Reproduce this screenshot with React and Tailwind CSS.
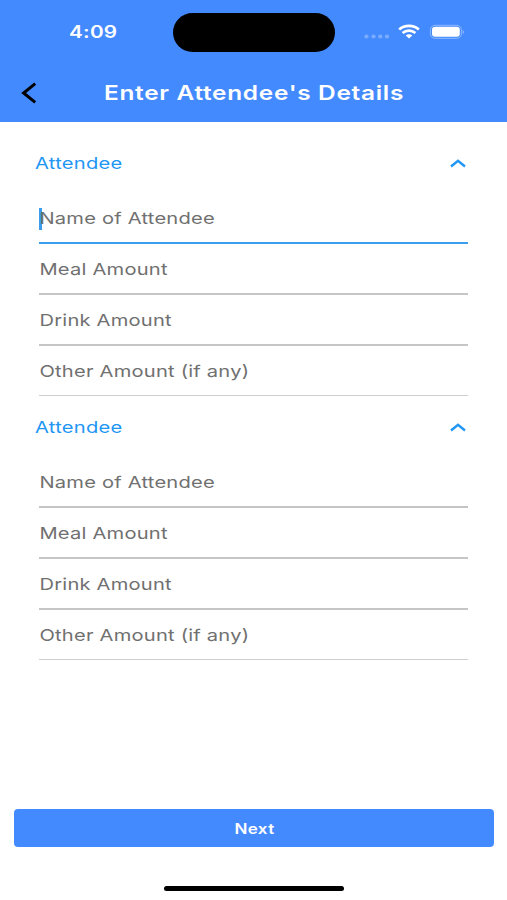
import { useState } from "react";

const fields = [
  { label: "Name of Attendee", row: "h-[51px] border-b-2 border-[#c4c4c4] pt-0.5" },
  { label: "Meal Amount", row: "h-[51px] border-b-2 border-[#c6c6c6] pt-0.5" },
  { label: "Drink Amount", row: "h-[51px] border-b-2 border-[#c6c6c6] pt-0.5" },
  { label: "Other Amount (if any)", row: "h-[50px] border-b border-[#cfcfcf] pt-px" },
];

function StatusBar() {
  return (
    <div className="flex h-16 items-center">
      <div className="w-[173px] pt-px pl-[69px] text-[17px] font-semibold text-white">
        <span className="inline-block origin-left scale-x-[1.22] tracking-[0.2px]">4:09</span>
      </div>
      <div className="h-[39px] w-[162px] rounded-full bg-black" />
      <div className="ml-[28px] flex items-center">
        <svg width="27" height="16" viewBox="0 0 27 16" fill="#79acff">
          <ellipse cx="3.5" cy="12.5" rx="2.2" ry="1.9" />
          <ellipse cx="10.5" cy="12.5" rx="2.2" ry="1.9" />
          <ellipse cx="17.3" cy="12.5" rx="2.2" ry="1.9" />
          <ellipse cx="24" cy="12.5" rx="2.2" ry="1.9" />
        </svg>
        <svg className="ml-2" width="22" height="16" viewBox="0 0 22 16" fill="none" stroke="white" strokeWidth="2.7">
          <path d="M1.2 5.5C6.5.6 15.5.6 20.8 5.5" />
          <path d="M4.6 8.9c3.6-3.1 9.2-3.1 12.8 0" />
          <path d="M7.7 11.4c2-1.7 4.6-1.7 6.6 0L11 14.6z" fill="white" stroke="none" />
        </svg>
        <svg className="ml-[9px]" width="37" height="16" viewBox="0 0 37 16">
          <rect x="1.4" y="1.3" width="31" height="13" rx="4.5" fill="none" stroke="#8db7ff" />
          <rect x="3" y="2.8" width="27.8" height="10" rx="3" fill="white" />
          <path d="M33.6 5.8v4.5c1.8-.8 1.8-3.7 0-4.5z" fill="#8db7ff" />
        </svg>
      </div>
    </div>
  );
}

function AttendeeSection({ focused }) {
  const [open, setOpen] = useState(true);

  return (
    <section className="h-[264px]">
      <button
        className="flex h-[71px] w-full items-center justify-between pt-3 pr-[41px] pl-[35px] text-[16.5px] text-[#2196f3]"
        onClick={() => setOpen(!open)}
      >
        <span className="inline-block origin-left scale-x-[1.22] tracking-[0.22px]">Attendee</span>
        <svg width="16" height="9" viewBox="0 0 16 9" fill="none" stroke="currentColor" strokeWidth="2.4">
          <path d="M1 7.5l7-5.7 7 5.7" />
        </svg>
      </button>
      {open && (
        <div className="mr-[39px] ml-[39px]">
          {fields.map((field, index) => {
            const active = focused && index === 0;

            return (
              <div
                key={field.label}
                className={`flex items-center text-[16.5px] text-[#707070] ${
                  active ? "h-[51px] border-b-2 border-[#3c9dec] pt-0.5" : field.row
                }`}
              >
                {active && <span className="mt-px -mr-[3px] h-[22px] w-[3px] bg-[#3c9dec]" />}
                <span className="inline-block origin-left scale-x-[1.22] pl-[0.4px] tracking-[0.17px]">
                  {field.label}
                </span>
              </div>
            );
          })}
        </div>
      )}
    </section>
  );
}

export default function App() {
  return (
    <main className="flex h-[900px] w-[507px] flex-col overflow-hidden bg-white font-['Inter',sans-serif]">
      <header className="h-[122px] bg-[#448aff]">
        <StatusBar />
        <div className="flex h-[58px] items-center text-white">
          <button className="w-[104px] pl-[21px]" aria-label="Back">
            <svg width="16" height="22" viewBox="0 0 16 22" fill="none" stroke="black" strokeWidth="3">
              <path d="M14.2 1.7L2.6 11l11.6 9.3" />
            </svg>
          </button>
          <h1 className="origin-left scale-x-[1.22] text-[20px] font-semibold tracking-[0.58px]">
            Enter Attendee's Details
          </h1>
        </div>
      </header>
      <AttendeeSection focused />
      <AttendeeSection />
      <footer className="mt-auto flex h-[91px] flex-col items-center pr-[13px] pl-3.5">
        <button className="h-[38px] w-full rounded bg-[#448aff] text-[14px] font-semibold text-white">
          <span className="inline-block scale-x-[1.22] tracking-[0.3px]">Next</span>
        </button>
        <div className="mt-[39px] h-[5px] w-[180px] rounded-full bg-black" />
      </footer>
    </main>
  );
}
